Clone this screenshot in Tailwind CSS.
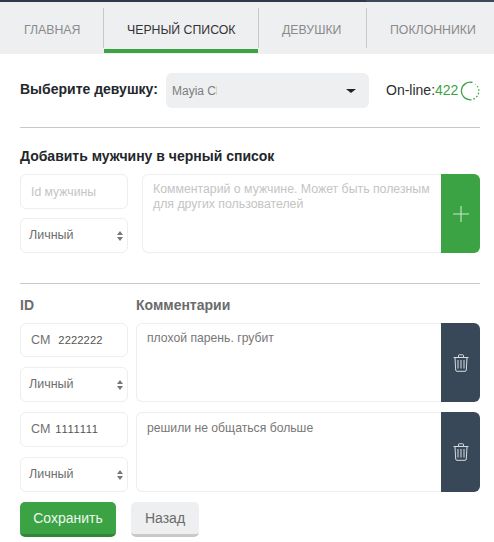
<!DOCTYPE html>
<html lang="ru">
<head>
<meta charset="utf-8">
<script src="https://cdn.jsdelivr.net/npm/@tailwindcss/browser@4"></script>
</head>
<body class="bg-white font-['Liberation_Sans',Arial,sans-serif] w-[494px] h-[542px] overflow-hidden">
<div class="flex h-[2px]"><div class="w-[366px] bg-[#2c3a4a]"></div><div class="flex-1 bg-[#3a4a5a]"></div></div>
<nav class="flex h-[52px] bg-[#eeeff1] text-[12.3px] overflow-hidden">
  <div class="w-[103px] shrink-0 pt-[19px] pl-[24px] text-[#8a8a8a]">ГЛАВНАЯ</div>
  <div class="w-[156px] shrink-0 relative pt-[19px] pl-[24px] text-[#333] h-[52px]">
    <span class="absolute left-0 top-[6px] h-[40px] w-px bg-[#c8c8c8]"></span>
    <span class="absolute right-0 top-[6px] h-[40px] w-px bg-[#c8c8c8]"></span>
    ЧЕРНЫЙ СПИСОК
    <span class="absolute left-px right-px top-[47px] h-[4px] bg-[#3ba344]"></span>
  </div>
  <div class="w-[107px] shrink-0 pt-[19px] pl-[23px] text-[#8a8a8a]">ДЕВУШКИ</div>
  <div class="flex-1 relative pt-[19px] pl-[24px] text-[#8a8a8a] whitespace-nowrap">
    <span class="absolute left-0 top-[6px] h-[40px] w-px bg-[#c8c8c8]"></span>
    ПОКЛОННИКИ
  </div>
</nav>
<main class="pl-[20px] pr-[14px]">
  <div class="flex items-center h-[35px] mt-[19px]">
    <b class="w-[146px] text-[14px] text-[#23272b] shrink-0 -mt-[2px] whitespace-nowrap">Выберите девушку:</b>
    <div class="w-[203px] h-[35px] bg-[#eeeff1] rounded-[6px] flex items-center pl-[6px] pr-[13px] justify-between shrink-0">
      <span class="text-[12px] text-[#7d7d7d] w-[45px] overflow-hidden whitespace-nowrap">Mayia Cheng</span>
      <span class="w-0 h-0 border-x-[5px] border-x-transparent border-t-[4px] border-t-[#222]"></span>
    </div>
    <span class="ml-[17px] text-[14px] text-[#2c2c2c] whitespace-nowrap">On-line:</span><span class="text-[14px] text-[#3ba344]">422</span>
    <svg class="ml-[2px] shrink-0" width="20" height="20" viewBox="0 0 20 20" fill="none" stroke="#3ba344" stroke-width="1.3"><path d="M12.5 1.5A8.8 8.8 0 1 0 10 18.8"/><path d="M10 18.8A8.8 8.8 0 0 0 18.8 10A8.8 8.8 0 0 0 15.5 3.2" stroke-dasharray="1.5 2"/></svg>
  </div>
  <hr class="mt-[19px] border-0 h-px bg-[#c9c9c9]">
  <h2 class="mt-[20px] text-[14px] font-bold text-[#23272b] leading-[16px]">Добавить мужчину в черный список</h2>
  <div class="mt-[10px] flex">
    <div class="w-[108px] shrink-0 flex flex-col gap-[9px]">
      <div class="h-[35px] border border-[#eeeeee] rounded-[6px] pl-[10px] pt-[1px] flex items-center text-[12.2px] text-[#c4c4c4]">Id мужчины</div>
      <div class="h-[35px] border border-[#eeeeee] rounded-[6px] pl-[8px] pr-[4px] flex items-center justify-between text-[12.5px] text-[#6e6e6e]">
        Личный
        <svg width="6" height="10" viewBox="0 0 6 10" fill="#777"><path d="M3 0 6 4H0zM3 10 0 6H6z"/></svg>
      </div>
    </div>
    <div class="ml-[14px] flex-1 flex h-[79px]">
      <div class="flex-1 border border-r-0 border-[#eeeeee] rounded-l-[6px] pl-[10px] pr-[8px] pt-[7px] text-[12.3px] leading-[14.5px] text-[#c4c4c4]">Комментарий о мужчине. Может быть полезным для других пользователей</div>
      <div class="w-[39px] bg-[#3ba344] rounded-r-[6px] flex items-center justify-center">
        <svg width="16" height="16" viewBox="0 0 16 16" stroke="#cde8cf" stroke-width="1.1"><path d="M8 0V16M0 8H16"/></svg>
      </div>
    </div>
  </div>
  <hr class="mt-[30px] border-0 h-px bg-[#c9c9c9]">
  <div class="flex mt-[13px] h-[16px] leading-[16px] text-[14px] font-bold text-[#6b6b6b]">
    <span class="w-[116px]">ID</span><span>Комментарии</span>
  </div>
  <div class="mt-[10px] flex flex-col gap-[10px]">
    <div class="flex">
      <div class="w-[108px] shrink-0 flex flex-col gap-[10px]">
        <div class="h-[34px] border border-[#eeeeee] rounded-[6px] pl-[10px] flex items-center text-[12.5px] text-[#707070]">СМ<span class="ml-[8px] text-[11.2px] tracking-[0.1px] text-[#555]">2222222</span></div>
        <div class="h-[35px] border border-[#eeeeee] rounded-[6px] pl-[8px] pr-[4px] flex items-center justify-between text-[12.5px] text-[#6e6e6e]">
          Личный
          <svg width="6" height="10" viewBox="0 0 6 10" fill="#777"><path d="M3 0 6 4H0zM3 10 0 6H6z"/></svg>
        </div>
      </div>
      <div class="ml-[8px] flex-1 flex h-[79px]">
        <div class="flex-1 border border-r-0 border-[#eeeeee] rounded-l-[6px] pl-[10px] pt-[7px] text-[12.2px] leading-[14px] text-[#777]">плохой парень. грубит</div>
        <div class="w-[39px] bg-[#384858] rounded-r-[6px] flex items-center justify-center">
          <svg width="16" height="18" viewBox="0 0 16 18" fill="none" stroke="#e8ecef" stroke-width="0.9"><path d="M0.5 3.5H15.5M5.5 3V1.5Q5.5 0.8 6.2 0.8H9.8Q10.5 0.8 10.5 1.5V3M2 3.8 2.7 16Q2.8 17.3 4 17.3H12Q13.2 17.3 13.3 16L14 3.8"/><path d="M5 6V14.5M8 6V14.5M11 6V14.5" stroke="#aab3bb" stroke-width="1.4"/></svg>
        </div>
      </div>
    </div>
    <div class="flex">
      <div class="w-[108px] shrink-0 flex flex-col gap-[10px]">
        <div class="h-[35px] border border-[#eeeeee] rounded-[6px] pl-[10px] flex items-center text-[12.5px] text-[#707070]">СМ<span class="ml-[5px] text-[11.2px] tracking-[0.7px] text-[#555]">1111111</span></div>
        <div class="h-[35px] border border-[#eeeeee] rounded-[6px] pl-[8px] pr-[4px] flex items-center justify-between text-[12.5px] text-[#6e6e6e]">
          Личный
          <svg width="6" height="10" viewBox="0 0 6 10" fill="#777"><path d="M3 0 6 4H0zM3 10 0 6H6z"/></svg>
        </div>
      </div>
      <div class="ml-[8px] flex-1 flex h-[80px]">
        <div class="flex-1 border border-r-0 border-[#eeeeee] rounded-l-[6px] pl-[10px] pt-[8px] text-[12.2px] leading-[14px] text-[#777]">решили не общаться больше</div>
        <div class="w-[39px] bg-[#384858] rounded-r-[6px] flex items-center justify-center">
          <svg width="16" height="18" viewBox="0 0 16 18" fill="none" stroke="#e8ecef" stroke-width="0.9"><path d="M0.5 3.5H15.5M5.5 3V1.5Q5.5 0.8 6.2 0.8H9.8Q10.5 0.8 10.5 1.5V3M2 3.8 2.7 16Q2.8 17.3 4 17.3H12Q13.2 17.3 13.3 16L14 3.8"/><path d="M5 6V14.5M8 6V14.5M11 6V14.5" stroke="#aab3bb" stroke-width="1.4"/></svg>
        </div>
      </div>
    </div>
  </div>
  <div class="mt-[10px] flex gap-[15px]">
    <div class="w-[96px] h-[35px] bg-[#3ba344] border-b-[3px] border-b-[#2f8538] rounded-[5px] flex items-center justify-center text-[14px] text-[#eef7ef]">Сохранить</div>
    <div class="w-[68px] h-[35px] bg-[#eeeff1] border-b-[3px] border-b-[#c9c9c9] rounded-[5px] flex items-center justify-center text-[14px] text-[#6b6b6b]">Назад</div>
  </div>
</main>
</body>
</html>
